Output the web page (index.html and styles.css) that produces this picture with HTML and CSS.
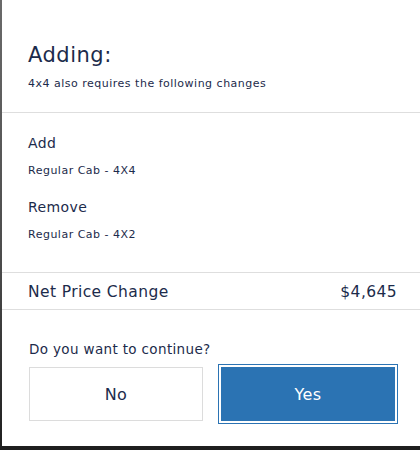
FILE: index.html
```html
<!DOCTYPE html>
<html lang="en">
<head>
<meta charset="utf-8">
<title>Adding 4x4</title>
<link rel="stylesheet" href="styles.css">
</head>
<body>
<div class="modal">
  <header class="head">
    <h1 class="title">Adding:</h1>
    <p class="subtitle">4x4 also requires the following changes</p>
  </header>
  <section class="changes">
    <div class="group">
      <h2 class="label">Add</h2>
      <p class="item">Regular Cab - 4X4</p>
    </div>
    <div class="group">
      <h2 class="label">Remove</h2>
      <p class="item">Regular Cab - 4X2</p>
    </div>
  </section>
  <div class="net">
    <span>Net Price Change</span>
    <span>$4,645</span>
  </div>
  <div class="confirm">
    <p class="question">Do you want to continue?</p>
    <div class="actions">
      <button class="btn btn-no" type="button">No</button>
      <button class="btn btn-yes" type="button">Yes</button>
    </div>
  </div>
</div>
</body>
</html>
```

FILE: styles.css
```css
* { box-sizing: border-box; }
html, body {
  margin: 0;
  height: 100%;
}
body {
  background: linear-gradient(180deg, #6a6a6a 0%, #4a4a4a 60%, #1e1e1e 100%);
  font-family: "DejaVu Sans", "Noto Sans", sans-serif;
  color: #1c2b4b;
  overflow: hidden;
}
.modal {
  margin-left: 2px;
  width: 418px;
  height: 446px;
  background: #fff;
}
.head {
  padding: 40px 25px 0 26px;
  height: 113px;
  border-bottom: 1px solid #dedede;
}
.title {
  margin: 0;
  font-size: 21px;
  font-weight: 400;
  line-height: 30px;
  letter-spacing: 0.5px;
}
.subtitle {
  margin: 6px 0 0;
  font-size: 11px;
  line-height: 16px;
  letter-spacing: 0.5px;
}
.changes {
  height: 160px;
  padding: 20px 25px 0 26px;
  border-bottom: 1px solid #dedede;
  display: flex;
  flex-direction: column;
  gap: 18px;
}
.label {
  margin: 0;
  font-size: 14px;
  font-weight: 400;
  line-height: 20px;
  letter-spacing: 0.4px;
}
.item {
  margin: 10px 0 0;
  font-size: 11px;
  line-height: 16px;
  letter-spacing: 0.5px;
}
.net {
  height: 37px;
  padding: 2px 23px 0 26px;
  display: flex;
  align-items: center;
  justify-content: space-between;
  font-size: 15.5px;
  letter-spacing: 0.4px;
  border-bottom: 1px solid #dedede;
}
.confirm {
  padding: 29px 25px 0 27px;
}
.question {
  margin: 0;
  font-size: 13.5px;
  line-height: 20px;
  letter-spacing: 0.35px;
}
.actions {
  margin-top: 8px;
  display: flex;
  gap: 18px;
}
.btn {
  width: 174px;
  height: 54px;
  font-family: inherit;
  font-size: 16px;
  letter-spacing: 0.4px;
  cursor: pointer;
}
.btn-no {
  background: #fff;
  border: 1px solid #dcdcdc;
  color: #1c2b4b;
}
.btn-yes {
  background: #2b73b3;
  border: none;
  color: #fff;
  outline: 1px solid #2b73b3;
  outline-offset: 2px;
}
```
